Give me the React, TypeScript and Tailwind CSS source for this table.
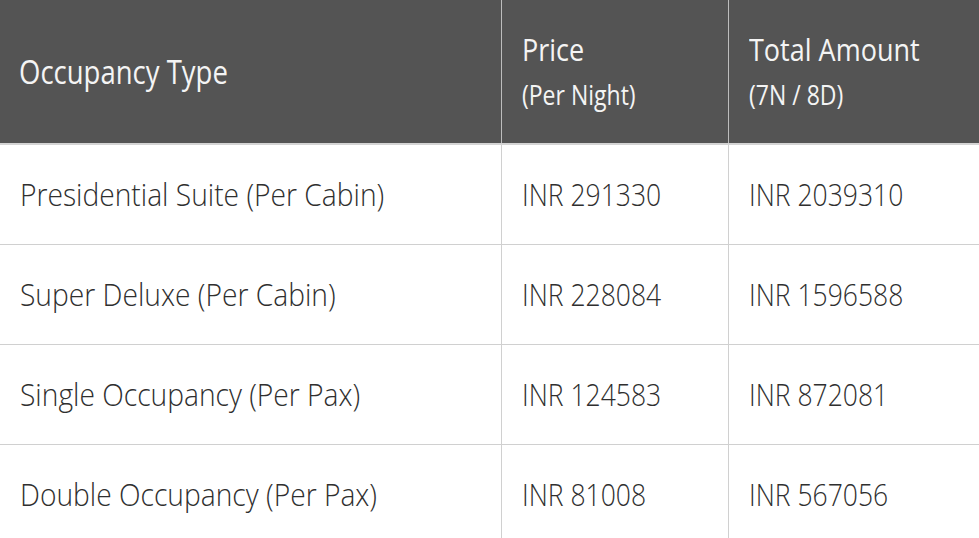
import type { ReactElement } from "react";

// Tariff table: occupancy type, nightly price and total for the package.
interface Rate {
  type: string;
  perNight: string;
  total: string;
}

const RATES: Rate[] = [
  { type: "Presidential Suite (Per Cabin)", perNight: "INR 291330", total: "INR 2039310" },
  { type: "Super Deluxe (Per Cabin)", perNight: "INR 228084", total: "INR 1596588" },
  { type: "Single Occupancy (Per Pax)", perNight: "INR 124583", total: "INR 872081" },
  { type: "Double Occupancy (Per Pax)", perNight: "INR 81008", total: "INR 567056" },
];

const FONT = "font-['Open_Sans','Noto_Sans',sans-serif]";

// The source glyphs are a touch taller than Open Sans, so stretch them a bit.
const TALL = "inline-block origin-center scale-y-[1.16]";

function HeadCell({ title, sub, last }: { title: string; sub?: string; last?: boolean }): ReactElement {
  return (
    <div
      className={
        "flex flex-col justify-center px-5 text-[#f4f4f4] " +
        (last ? "" : "border-r border-[#bdbdbd]")
      }
    >
      <div className={sub ? "text-[27px] leading-[46px]" : "text-[27.5px] leading-[40px] -ml-[1px]"}>
        <span className={TALL}>{title}</span>
      </div>
      {sub && (
        <div className="text-[23px] leading-[46px]">
          <span className={TALL}>{sub}</span>
        </div>
      )}
    </div>
  );
}

function BodyCell({ children, wide }: { children: string; wide?: boolean }): ReactElement {
  return (
    <div
      className={
        "flex items-center px-5 font-light text-[#2f2f2f] " +
        (wide ? "text-[28.2px] border-r border-[#d0d0d0]" : "text-[26.5px]")
      }
    >
      <span className={"inline-block origin-center " + (wide ? "scale-y-[1.12]" : "scale-y-[1.2]")}>
        {children}
      </span>
    </div>
  );
}

export default function App(): ReactElement {
  return (
    <div className={"w-[979px] h-[538px] overflow-hidden bg-white " + FONT}>
      <div className="grid grid-cols-[502px_227px_1fr] h-[145px] bg-[#545454] border-b-2 border-[#d4d4d4]">
        <HeadCell title="Occupancy Type" />
        <HeadCell title="Price" sub="(Per Night)" />
        <HeadCell title="Total Amount" sub="(7N / 8D)" last />
      </div>
      {RATES.map((r) => (
        <div key={r.type} className="grid grid-cols-[502px_227px_1fr] h-[100px] border-b border-[#d0d0d0]">
          <BodyCell wide>{r.type}</BodyCell>
          <div className="border-r border-[#d0d0d0] flex">
            <BodyCell>{r.perNight}</BodyCell>
          </div>
          <BodyCell>{r.total}</BodyCell>
        </div>
      ))}
    </div>
  );
}
